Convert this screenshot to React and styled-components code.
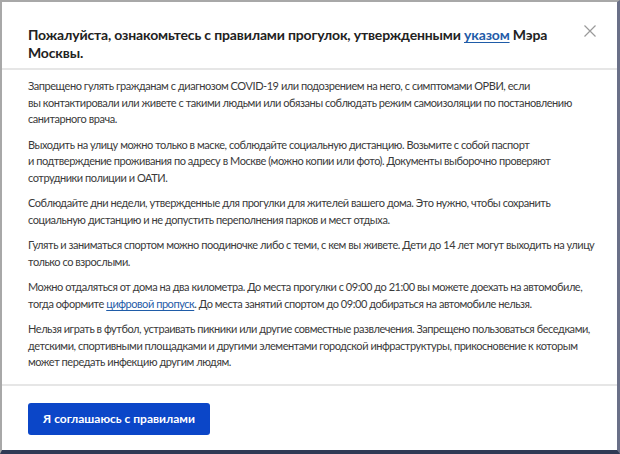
import styled, { createGlobalStyle } from "styled-components";

const GlobalStyle = createGlobalStyle`
  html, body {
    margin: 0;
    padding: 0;
    background: #2f3a55;
  }
  body {
    font-family: Lato, "Noto Sans", sans-serif;
    color: #333;
  }
`;

const Frame = styled.div`
  width: 620px;
  height: 454px;
  box-sizing: border-box;
  border-top: 2px solid #a8a8a8;
  border-left: 2px solid #a8a8a8;
  border-right: 3px solid #6a7088;
  border-bottom: 4px solid #2f3a55;
  background: #fff;
  display: flex;
  flex-direction: column;
`;

const Header = styled.div`
  display: flex;
  align-items: flex-start;
  justify-content: space-between;
  gap: 20px;
  padding: 24px 20px 0 26px;
  height: 68px;
  box-sizing: border-box;
  border-bottom: 2px solid #e6e6e6;
`;

const Title = styled.h2`
  flex: 1;
  margin: 0;
  font-size: 14px;
  line-height: 18px;
  letter-spacing: -0.15px;
  font-weight: 700;
  color: #222;
`;

const Link = styled.a`
  color: #1f5ca8;
  text-decoration: underline;
  text-underline-offset: 2px;
`;

const Close = styled.button`
  flex: none;
  border: 0;
  background: none;
  padding: 0;
  margin-top: -2px;
  width: 14px;
  height: 14px;
  cursor: pointer;
  display: flex;
`;

const Body = styled.div`
  padding: 8px 16px 13px 26px;
  border-bottom: 2px solid #e6e6e6;
`;

const Paragraph = styled.p`
  margin: 0 0 9px;
  font-size: 11px;
  line-height: 16.5px;
  letter-spacing: -0.45px;
  white-space: nowrap;
  color: #3a3a3a;
  &:last-child {
    margin-bottom: 0;
  }
`;

const Footer = styled.div`
  flex: 1;
  padding: 17px 26px 0;
`;

const Button = styled.button`
  width: 182px;
  height: 32px;
  border: 0;
  border-radius: 3px;
  background: #0b46c8;
  color: #fff;
  font-family: Lato, "Noto Sans", sans-serif;
  font-size: 12px;
  font-weight: 700;
  cursor: pointer;
`;

const CloseIcon = () => (
  <svg width="14" height="14" viewBox="0 0 14 14">
    <path d="M1.5 1.5L12.5 12.5M12.5 1.5L1.5 12.5" stroke="#9a9a9a" strokeWidth="1.2" fill="none" />
  </svg>
);

const App = () => {
  return (
    <>
      <GlobalStyle />
      <Frame>
        <Header>
          <Title>
            Пожалуйста, ознакомьтесь с правилами прогулок, утвержденными{" "}
            <Link href="#">указом</Link> Мэра Москвы.
          </Title>
          <Close aria-label="Закрыть">
            <CloseIcon />
          </Close>
        </Header>
        <Body>
          <Paragraph>
            Запрещено гулять гражданам с диагнозом COVID-19 или подозрением на него, с симптомами ОРВИ, если
            <br />
            вы контактировали или живете с такими людьми или обязаны соблюдать режим самоизоляции по постановлению
            <br />
            санитарного врача.
          </Paragraph>
          <Paragraph>
            Выходить на улицу можно только в маске, соблюдайте социальную дистанцию. Возьмите с собой паспорт
            <br />
            и подтверждение проживания по адресу в Москве (можно копии или фото). Документы выборочно проверяют
            <br />
            сотрудники полиции и ОАТИ.
          </Paragraph>
          <Paragraph>
            Соблюдайте дни недели, утвержденные для прогулки для жителей вашего дома. Это нужно, чтобы сохранить
            <br />
            социальную дистанцию и не допустить переполнения парков и мест отдыха.
          </Paragraph>
          <Paragraph>
            Гулять и заниматься спортом можно поодиночке либо с теми, с кем вы живете. Дети до 14 лет могут выходить на улицу
            <br />
            только со взрослыми.
          </Paragraph>
          <Paragraph>
            Можно отдаляться от дома на два километра. До места прогулки с 09:00 до 21:00 вы можете доехать на автомобиле,
            <br />
            тогда оформите <Link href="#">цифровой пропуск</Link>. До места занятий спортом до 09:00 добираться на автомобиле нельзя.
          </Paragraph>
          <Paragraph>
            Нельзя играть в футбол, устраивать пикники или другие совместные развлечения. Запрещено пользоваться беседками,
            <br />
            детскими, спортивными площадками и другими элементами городской инфраструктуры, прикосновение к которым
            <br />
            может передать инфекцию другим людям.
          </Paragraph>
        </Body>
        <Footer>
          <Button>Я соглашаюсь с правилами</Button>
        </Footer>
      </Frame>
    </>
  );
};

export default App;
